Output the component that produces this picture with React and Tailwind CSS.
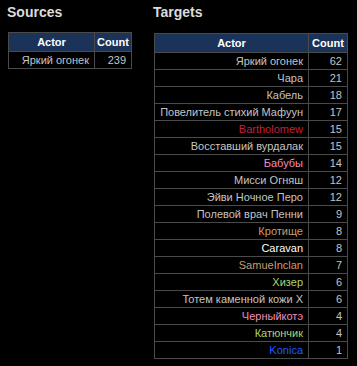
import React from "react";

const sources = [{ name: "Яркий огонек", count: 239, color: "text-[#c4c4c4]" }];

const targets = [
  { name: "Яркий огонек", count: 62, color: "text-[#c4c4c4]" },
  { name: "Чара", count: 21, color: "text-[#c4c4c4]" },
  { name: "Кабель", count: 18, color: "text-[#c4c4c4]" },
  { name: "Повелитель стихий Мафуун", count: 17, color: "text-[#c4c4c4]" },
  { name: "Bartholomew", count: 15, color: "text-[#c41f3b]" },
  { name: "Восставший вурдалак", count: 15, color: "text-[#c4c4c4]" },
  { name: "Бабубы", count: 14, color: "text-[#f58cba]" },
  { name: "Мисси Огняш", count: 12, color: "text-[#c4c4c4]" },
  { name: "Эйви Ночное Перо", count: 12, color: "text-[#c4c4c4]" },
  { name: "Полевой врач Пенни", count: 9, color: "text-[#c4c4c4]" },
  { name: "Кротище", count: 8, color: "text-[#c79c6e]" },
  { name: "Caravan", count: 8, color: "text-white" },
  { name: "SamueInclan", count: 7, color: "text-[#c79c6e]" },
  { name: "Хизер", count: 6, color: "text-[#abd473]" },
  { name: "Тотем каменной кожи X", count: 6, color: "text-[#c4c4c4]" },
  { name: "Черныйкотэ", count: 4, color: "text-[#f58cba]" },
  { name: "Катюнчик", count: 4, color: "text-[#abd473]" },
  { name: "Konica", count: 1, color: "text-[#2459ff]" },
];

const ActorTable = ({ rows, width, actorWidth, countWidth }) => (
  <table className={`${width} table-fixed border-collapse text-[11px] leading-none whitespace-nowrap`}>
    <thead>
      <tr className="bg-[#1b3358] text-white">
        <th className={`${actorWidth} h-[19px] border border-[#4a4a4a] text-center font-bold`}>Actor</th>
        <th className={`${countWidth} h-[19px] border border-[#4a4a4a] text-center font-bold`}>Count</th>
      </tr>
    </thead>
    <tbody>
      {rows.map((row, i) => (
        <tr key={i}>
          <td className={`h-[17px] border border-[#4a4a4a] px-[5px] text-right ${row.color}`}>{row.name}</td>
          <td className="h-[17px] border border-[#4a4a4a] px-[5px] text-right text-[#c4c4c4]">{row.count}</td>
        </tr>
      ))}
    </tbody>
  </table>
);

export default function App() {
  return (
    <div className="w-[357px] h-[366px] bg-black flex font-['Liberation_Sans',sans-serif] text-[#c4c4c4]">
      <div className="pl-[8px] pt-[3px]">
        <h2 className="text-[14px] font-bold text-[#dcdcdc] leading-[18px] -ml-[1px]">Sources</h2>
        <div className="mt-[11px]">
          <ActorTable rows={sources} width="w-[123px]" actorWidth="w-[86px]" countWidth="w-[37px]" />
        </div>
      </div>
      <div className="pl-[22px] pt-[3px]">
        <h2 className="text-[14px] font-bold text-[#dcdcdc] leading-[18px] -ml-[1px]">Targets</h2>
        <div className="mt-[12px]">
          <ActorTable rows={targets} width="w-[193px]" actorWidth="w-[154px]" countWidth="w-[39px]" />
        </div>
      </div>
    </div>
  );
}
